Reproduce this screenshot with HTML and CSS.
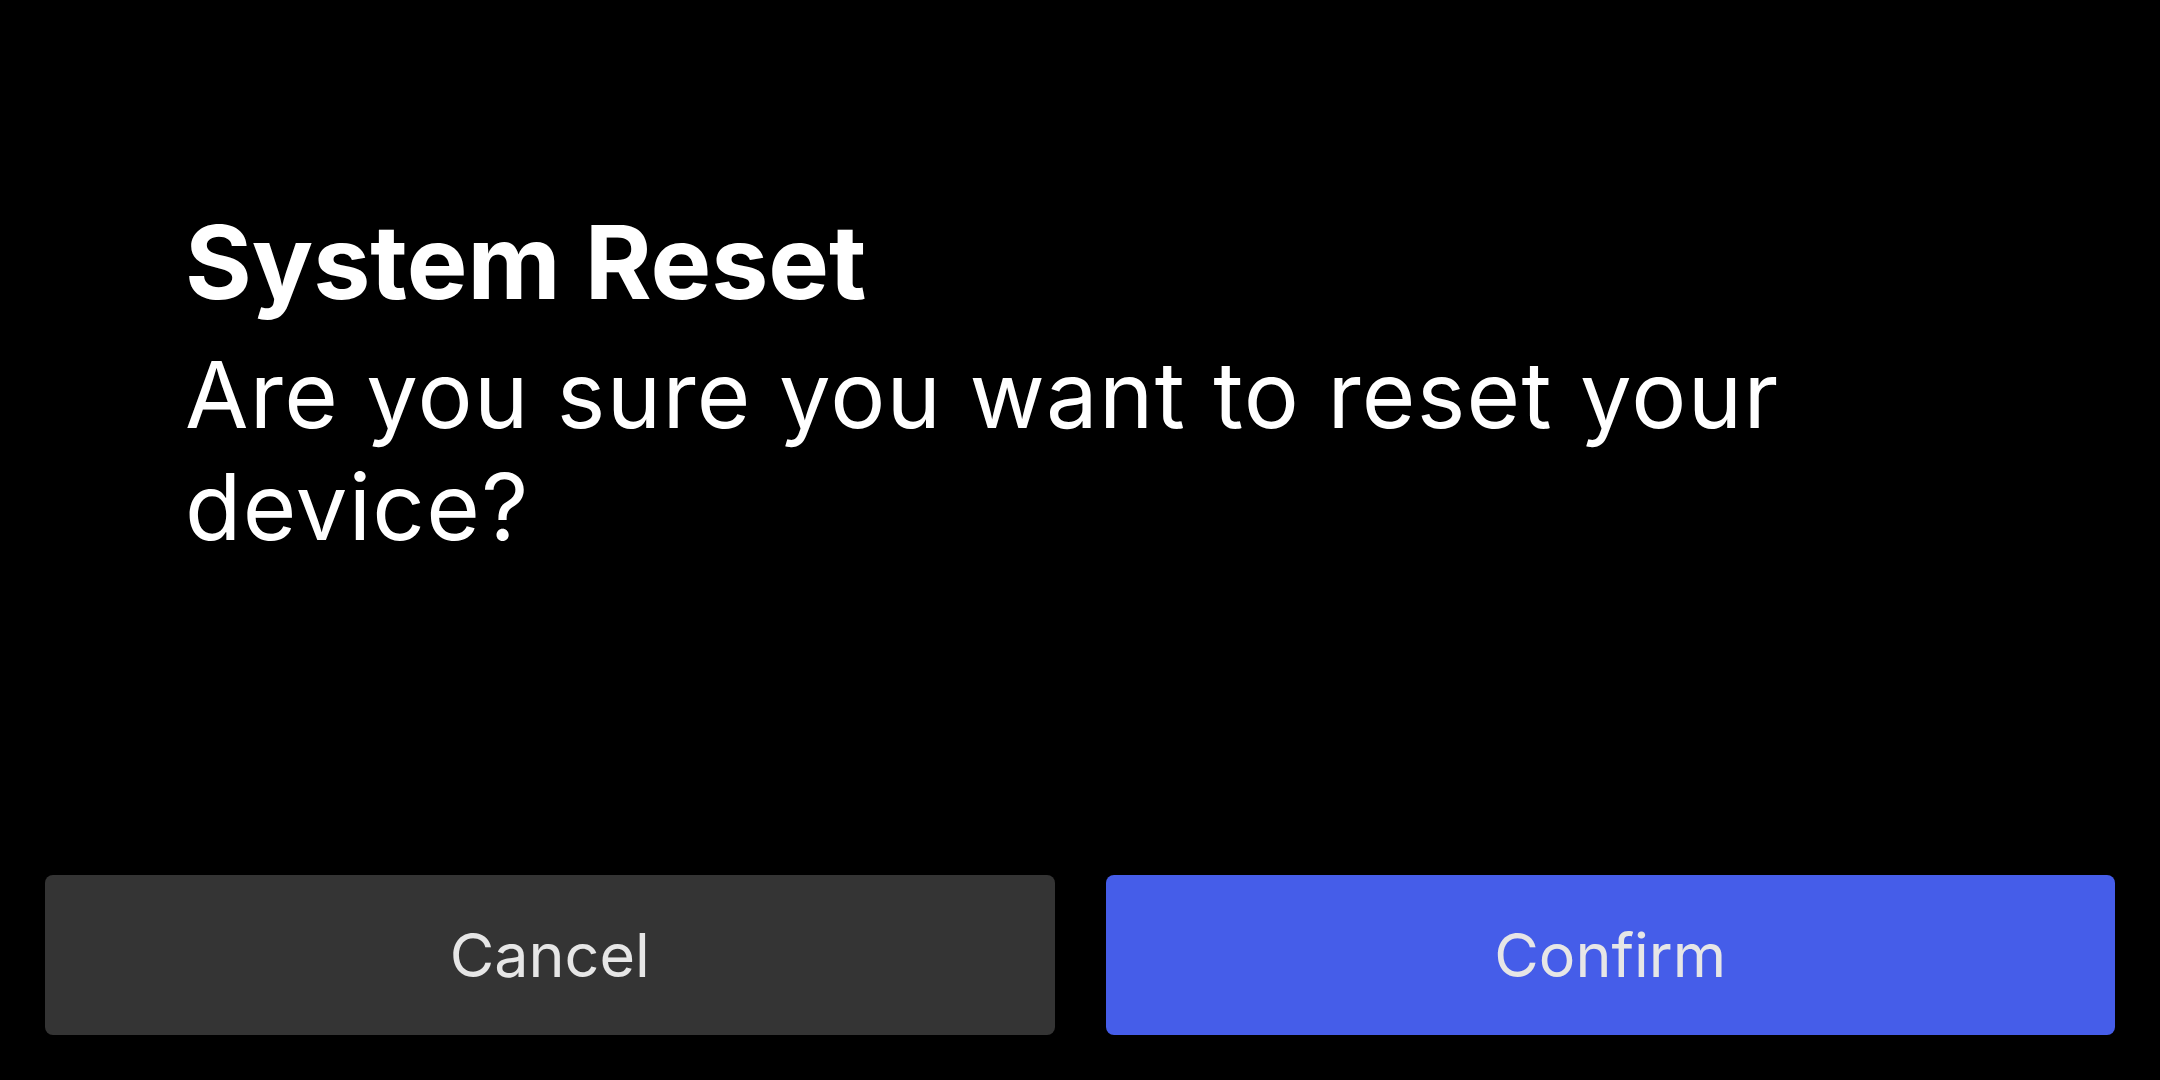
FILE: index.html
```html
<!DOCTYPE html>
<html lang="en">
<head>
    <meta charset="UTF-8">
    <meta name="viewport" content="width=device-width, initial-scale=1.0">
    <title>System Reset</title>
    <link rel="stylesheet" href="styles.css">
</head>
<body>
    <div class="screen">
        <div class="message">
            <h1 class="title">System Reset</h1>
            <p class="question">Are you sure you want to reset your device?</p>
        </div>

        <div class="actions">
            <button class="button button-cancel">Cancel</button>
            <button class="button button-confirm">Confirm</button>
        </div>
    </div>
</body>
</html>
```

FILE: styles.css
```css
html, body {
    margin: 0;
    padding: 0;
    background: #000;
}
body {
    font-family: 'Inter', 'Noto Sans', sans-serif;
    color: #fff;
}
.screen {
    height: 100vh;
    box-sizing: border-box;
    display: flex;
    flex-direction: column;
    justify-content: space-between;
    padding: 0 45px 45px;
}
.message {
    padding: 201px 140px 0;
}
.title {
    margin: 0 0 16px;
    font-size: 102px;
    font-weight: 700;
    line-height: 1.2;
}
.question {
    margin: 0;
    font-size: 92px;
    font-weight: 400;
    line-height: 112px;
    letter-spacing: 1.3px;
}
.actions {
    display: grid;
    grid-template-columns: 1fr 1fr;
    gap: 51px;
}
.button {
    height: 160px;
    border: none;
    border-radius: 8px;
    font-family: inherit;
    font-size: 61px;
    color: #e6e6e6;
    cursor: pointer;
}
.button-cancel {
    background: #343434;
}
.button-confirm {
    background: #455de9;
}
```
